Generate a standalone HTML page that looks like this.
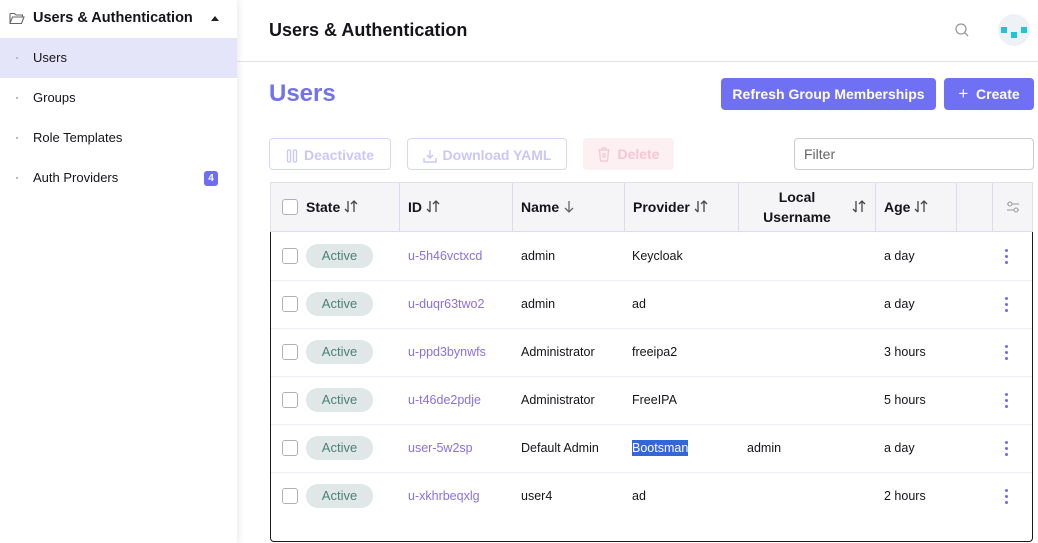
<!DOCTYPE html>
<html><head><meta charset="utf-8"><style>
*{box-sizing:border-box;margin:0;padding:0}
body{width:1038px;height:543px;overflow:hidden;background:#fff;font-family:"Liberation Sans",sans-serif;color:#141419;position:relative;font-size:13px}
.a{position:absolute}
.side{left:0;top:0;width:237px;height:543px;background:#fff;box-shadow:2px 0 6px rgba(0,0,0,.08);z-index:2}
.nav{position:absolute;left:0;width:237px;height:40px;line-height:40px;padding-left:33px;font-size:13px;color:#141419}
.nav:before{content:"";position:absolute;left:16px;top:19px;width:2px;height:2px;background:#bbb}
.btn{position:absolute;height:32px;line-height:32px;border-radius:4px;font-size:14px;font-weight:bold;text-align:center}
.btn svg{vertical-align:-3px;margin-right:6px}
.hd{position:absolute;top:183px;height:48px;font-weight:bold;font-size:14px;color:#141419;line-height:48px}
.hd svg{vertical-align:-2px;margin-left:4px}
.vl{position:absolute;top:183px;height:48px;width:1px;background:#dcdcf0}
.cb{position:absolute;width:16px;height:16px;border:1px solid #b0b0bc;border-radius:3px;background:#fff}
.cell{position:absolute;font-size:12.5px;line-height:16px}
.pill{position:absolute;width:67px;height:24px;line-height:24px;border-radius:12px;background:#dfe8e7;color:#4c7f77;text-align:center;font-size:13px}
.dots{position:absolute;width:3px}
.dots i{display:block;width:3px;height:3px;border-radius:50%;background:#6c6cf0;margin-bottom:3px}
</style></head><body>
<svg width="0" height="0" style="position:absolute"><defs><g id="srt"><path d="M4 2v11M1 10l3 3M10 13V2M7 5l3-3 3 3" fill="none" stroke="#444" stroke-width="1.3"/></g></defs></svg>
<div class="a side">
 <svg class="a" style="left:9px;top:11px" width="16" height="14" viewBox="0 0 16 14"><path d="M1 2.5h4.5l1.5 1.5h6.5v2M1 2.5v10h11.5l2.5-6.5H3.5L1 12" fill="none" stroke="#666" stroke-width="1.1"/></svg>
 <div class="a" style="left:33px;top:10px;font-size:14.5px;font-weight:bold">Users &amp; Authentication</div>
 <div class="a" style="left:211px;top:16px;width:0;height:0;border-left:4px solid transparent;border-right:4px solid transparent;border-bottom:5px solid #222"></div>
 <div class="nav" style="top:38px;background:#e5e5fa">Users</div>
 <div class="nav" style="top:78px">Groups</div>
 <div class="nav" style="top:118px">Role Templates</div>
 <div class="nav" style="top:158px">Auth Providers</div>
 <div class="a" style="left:204px;top:171px;width:14px;height:15px;border-radius:3px;background:#6d6df5;color:#fff;font-size:10px;font-weight:bold;text-align:center;line-height:15px">4</div>
</div>
<div class="a" style="left:269px;top:20px;font-size:18px;font-weight:bold">Users &amp; Authentication</div>
<svg class="a" style="left:954px;top:22px" width="16" height="16" viewBox="0 0 16 16"><circle cx="7" cy="7" r="5" fill="none" stroke="#999" stroke-width="1.3"/><path d="M10.6 10.6l3.5 3.5" stroke="#999" stroke-width="1.3"/></svg>
<div class="a" style="left:998px;top:14px;width:32px;height:32px;border-radius:50%;background:#eef1f6"></div>
<div class="a" style="left:1001px;top:27px;width:6px;height:6px;background:#1ec5d8"></div>
<div class="a" style="left:1011px;top:32px;width:6px;height:6px;background:#1ec5d8"></div>
<div class="a" style="left:1021px;top:27px;width:6px;height:6px;background:#1ec5d8"></div>
<div class="a" style="left:237px;top:61px;width:801px;height:1px;background:#e2e2f0"></div>
<div class="a" style="left:269px;top:80px;font-size:24px;font-weight:bold;color:#7272f0">Users</div>
<div class="btn" style="left:721px;top:78px;width:215px;background:#7070f5;color:#fff">Refresh Group Memberships</div>
<div class="btn" style="left:944px;top:78px;width:90px;background:#7070f5;color:#fff"><span style="font-weight:normal;font-size:17px">+</span>&nbsp; Create</div>
<div class="btn" style="left:269px;top:138px;width:122px;border:1px solid #d6d6fa;color:#c8c8f8"><svg width="12" height="14" viewBox="0 0 12 14"><rect x="1.5" y="1" width="3" height="12" rx="1" fill="none" stroke="#c8c8f8" stroke-width="1.3"/><rect x="7.5" y="1" width="3" height="12" rx="1" fill="none" stroke="#c8c8f8" stroke-width="1.3"/></svg>Deactivate</div>
<div class="btn" style="left:407px;top:138px;width:160px;border:1px solid #d6d6fa;color:#c8c8f8"><svg width="14" height="14" viewBox="0 0 14 14"><path d="M7 1v8M4 6l3 3 3-3M1 9v4h12V9" fill="none" stroke="#c8c8f8" stroke-width="1.4"/></svg>Download YAML</div>
<div class="btn" style="left:583px;top:138px;width:91px;background:#fdf0f3;color:#f5c6d4"><svg width="14" height="15" viewBox="0 0 14 15"><path d="M1 3h12M5 3V1h4v2M2.5 3l1 11h7l1-11M6 6v5M8 6v5" fill="none" stroke="#f5c6d4" stroke-width="1.3"/></svg>Delete</div>
<div class="a" style="left:794px;top:138px;width:240px;height:32px;border:1px solid #ccc;border-radius:4px;padding-left:9px;line-height:31px;font-size:14px;color:#666">Filter</div>
<div class="a" style="left:270px;top:182px;width:763px;height:360px;border:1px solid #1a1a1a;border-top:1px solid #e0e0ef;border-radius:0 0 4px 4px"></div>
<div class="a" style="left:270px;top:182px;width:763px;height:50px;background:#f5f5f7;border:1px solid #e0e0ef;border-bottom:1px solid #dcdcf0"></div>
<div class="cb" style="left:282px;top:199px"></div>
<div class="hd" style="left:306px">State<svg width="14" height="15"><use href="#srt"/></svg></div>
<div class="vl" style="left:399px"></div><div class="hd" style="left:408px">ID<svg width="14" height="15"><use href="#srt"/></svg></div>
<div class="vl" style="left:512px"></div><div class="hd" style="left:521px">Name<svg width="12" height="15" viewBox="0 0 12 15"><path d="M6 2v11M2 9l4 4 4-4" fill="none" stroke="#666" stroke-width="1.3"/></svg></div>
<div class="vl" style="left:624px"></div><div class="hd" style="left:633px">Provider<svg width="14" height="15"><use href="#srt"/></svg></div>
<div class="vl" style="left:738px"></div><div class="hd" style="left:746px;width:102px;text-align:center;line-height:20px;top:187px">Local<br>Username</div><div class="hd" style="left:848px"><svg width="14" height="15"><use href="#srt"/></svg></div>
<div class="vl" style="left:875px"></div><div class="hd" style="left:884px">Age<svg width="14" height="15"><use href="#srt"/></svg></div>
<div class="vl" style="left:956px"></div><div class="vl" style="left:992px"></div>
<svg class="a" style="left:1006px;top:201px" width="14" height="12" viewBox="0 0 14 12"><path d="M1 3h12M1 9h12" stroke="#999"/><circle cx="4" cy="3" r="2" fill="#f5f5f7" stroke="#999"/><circle cx="10" cy="9" r="2" fill="#f5f5f7" stroke="#999"/></svg>
<div id="rows"></div>
<script>
var d=[["u-5h46vctxcd","admin","Keycloak","","a day"],["u-duqr63two2","admin","ad","","a day"],["u-ppd3bynwfs","Administrator","freeipa2","","3 hours"],["u-t46de2pdje","Administrator","FreeIPA","","5 hours"],["user-5w2sp","Default Admin","Bootsman","admin","a day"],["u-xkhrbeqxlg","user4","ad","","2 hours"]];
var h="";d.forEach(function(r,i){var y=232+i*48;
if(i>0)h+='<div class="a" style="left:271px;top:'+y+'px;width:761px;height:1px;background:#ededf7"></div>';
h+='<div class="cb" style="left:282px;top:'+(y+16)+'px"></div><div class="pill" style="left:306px;top:'+(y+12)+'px">Active</div>';
h+='<div class="cell" style="left:408px;top:'+(y+16)+'px;color:#8a6ee8">'+r[0]+'</div>';
h+='<div class="cell" style="left:521px;top:'+(y+16)+'px">'+r[1]+'</div>';
h+='<div class="cell" style="left:632px;top:'+(y+16)+'px'+(r[2]=="Bootsman"?';background:#3367d6;color:#fff':'')+'">'+r[2]+'</div>';
h+='<div class="cell" style="left:747px;top:'+(y+16)+'px">'+r[3]+'</div>';
h+='<div class="cell" style="left:884px;top:'+(y+16)+'px">'+r[4]+'</div>';
h+='<div class="dots" style="left:1005px;top:'+(y+17)+'px"><i></i><i></i><i></i></div>';});
document.getElementById("rows").innerHTML=h;
</script>
</body></html>
